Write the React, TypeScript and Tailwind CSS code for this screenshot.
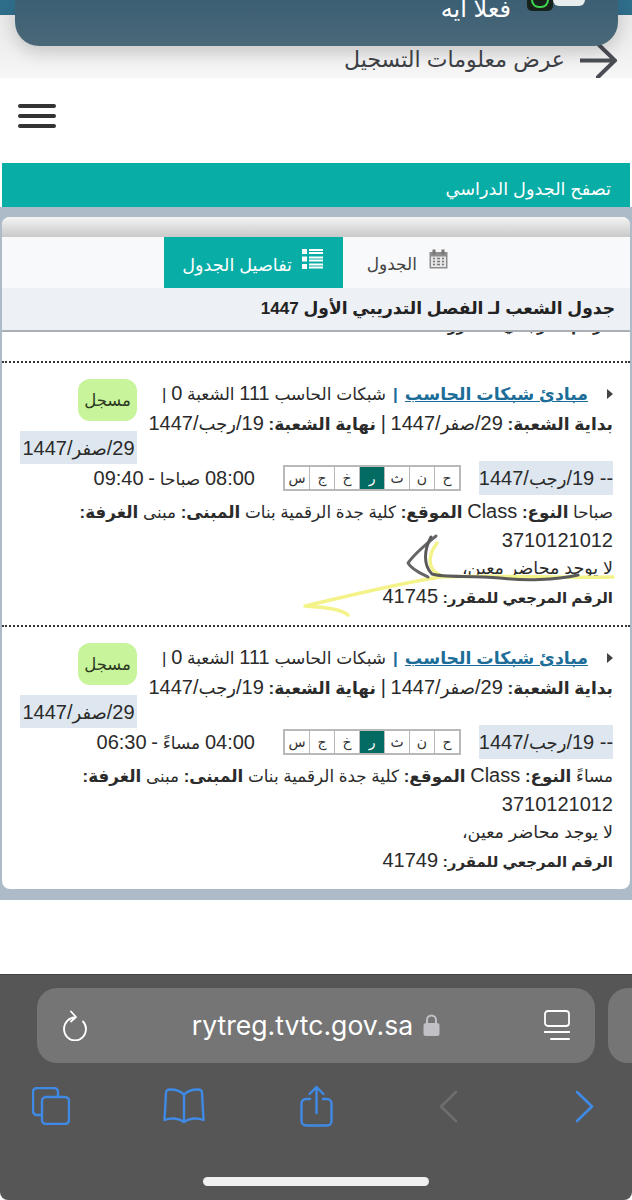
const font = "font-['Liberation_Sans','DejaVu_Sans',sans-serif]";

function N(props: { children: string }) {
  return <span className="text-[20px]">{props.children}</span>;
}

function HijriDate(props: { d: string; m: string }) {
  return (
    <span className="text-[18px]">
      <N>{props.d + "/"}</N>
      {props.m}
      <N>/1447</N>
    </span>
  );
}

function DayTable() {
  const days = ["ح", "ن", "ث", "ر", "خ", "ج", "س"];
  return (
    <div className="flex h-[26px] w-[178px] border-2 border-[#b9b9b9] bg-white">
      {days.map((d, i) => (
        <div
          key={i}
          className={
            d === "ر"
              ? "flex-1 flex items-center justify-center text-[14px] bg-[#046b63] text-white border-l border-[#b9b9b9]"
              : "flex-1 flex items-center justify-center text-[14px] text-[#333] border-l border-[#b9b9b9] last:border-l-0"
          }
        >
          {d}
        </div>
      ))}
    </div>
  );
}

function Section(props: { t1: string; t2: string; period: string; type: string; ref_no: string }) {
  return (
    <div className="border-t-2 border-dotted border-[#333] pt-[16px] pr-[17px] pl-[18px] h-[264px]">
      <div className="flex justify-between h-[82px]">
        <div className="text-[17px] leading-[29px] text-[#2b2b2b] whitespace-nowrap">
          <div className="flex items-center">
            <span className="ml-[19px] h-0 w-0 border-y-[5px] border-y-transparent border-l-[6px] border-l-[#444]" />
            <span className="text-[#1c6d98] underline font-bold text-[17.300px]">مبادئ شبكات الحاسب</span>
            <span className="mx-[7px] text-[#1c6d98] font-bold">|</span>
            <span>
              شبكات الحاسب <N>111</N> الشعبة <N>0</N> |
            </span>
          </div>
          <div>
            <b>بداية الشعبة:</b> <HijriDate d="29" m="صفر" /> <N>|</N> <b>نهاية الشعبة:</b> <HijriDate d="19" m="رجب" />
          </div>
        </div>
        <div className="w-[117px] flex flex-col items-start">
          <div className="w-[59px] h-[42px] rounded-[12px] bg-[#c8f59c] flex items-center justify-center text-[16.500px] text-[#2c3a20] shrink-0">
            مسجل
          </div>
          <div className="mt-[10px] w-[117px] h-[33px] bg-[#dee7ef] flex items-center justify-center text-[#2b2b2b] whitespace-nowrap shrink-0">
            <HijriDate d="29" m="صفر" />
          </div>
        </div>
      </div>
      <div className="flex items-center h-[34px] text-[17px] text-[#2b2b2b] whitespace-nowrap">
        <div className="w-[134px] h-[34px] bg-[#dee7ef] flex items-center justify-center">
          <span>
            <N>-- </N>
            <HijriDate d="19" m="رجب" />
          </span>
        </div>
        <div className="mr-[18px]"><DayTable /></div>
        <div className="mr-[28px]">
          <N>{props.t1}</N> {props.period} <N>-</N> <N>{props.t2}</N>
        </div>
      </div>
      <div className="mt-[3px] text-[16.800px] leading-[27.5px] text-[#2b2b2b] whitespace-nowrap">
        <div>
          {props.type} <b>النوع:</b> <N>Class</N> <b>الموقع:</b> كلية جدة الرقمية بنات <b>المبنى:</b> مبنى <b>الغرفة:</b>
        </div>
        <div><N>3710121012</N></div>
        <div className="text-[17.500px]">لا يوجد محاضر معين،</div>
        <div>
          <b className="text-[15px]">الرقم المرجعي للمقرر:</b> <N>{props.ref_no}</N>
        </div>
      </div>
    </div>
  );
}

export default function App() {
  return (
    <div className={"relative w-[632px] h-[1200px] overflow-hidden bg-white flex flex-col " + font} dir="rtl">
      {/* top strip */}
      <div className="h-[78px] shrink-0 bg-gradient-to-b from-[#e6e6e6] to-[#f6f6f6]">
        <div className="h-[15px] bg-[#2f6f8c]" />
        <div className="flex items-start h-[63px] pr-[15px] pt-[28px] text-[#3e4146]">
          <svg width="37" height="35" viewBox="0 0 37 35" className="shrink-0">
            <path d="M0 17.500H35M18 1L35 17.500L18 34" fill="none" stroke="#4a4e54" strokeWidth="4" strokeLinecap="round" strokeLinejoin="miter" />
          </svg>
          <span className="mr-[15px] mt-[5px] text-[22px] leading-[24px] whitespace-nowrap">عرض معلومات التسجيل</span>
        </div>
      </div>

      {/* notification overlay */}
      <div className="absolute left-[15px] top-0 w-[603px] h-[46px] rounded-b-[24px] bg-gradient-to-b from-[#3c5f74] to-[#4a6878] shadow-[0_6px_18px_rgba(0,0,0,0.18)] overflow-hidden">
        <div className="flex items-start pr-[33px]">
          <div className="w-[32px] h-[6px] rounded-b-[14px] bg-[#e8eeee]" />
          <div className="w-[26px] h-[11px] rounded-b-[5px] bg-[#17231a] flex justify-center overflow-hidden">
            <div className="w-[18px] h-[8px] rounded-b-full border-2 border-t-0 border-[#3fd24f]" />
          </div>
          <span className="mr-[16px] text-[24px] leading-[18px] text-white whitespace-nowrap">فعلا ايه</span>
        </div>
      </div>

      {/* nav */}
      <div className="h-[85px] shrink-0 flex justify-end items-start pt-[26px] pl-[18px]">
        <div className="flex flex-col gap-[6px] w-[38px]">
          <div className="h-[4px] rounded bg-[#333]" />
          <div className="h-[4px] rounded bg-[#333]" />
          <div className="h-[4px] rounded bg-[#333]" />
        </div>
      </div>

      {/* teal title */}
      <div className="h-[44px] mx-[2px] shrink-0 bg-[#08ada6] flex items-end justify-start pr-[19px] pb-[4px] text-white text-[17.700px] whitespace-nowrap">
        تصفح الجدول الدراسي
      </div>

      {/* panel */}
      <div className="h-[693px] shrink-0 bg-[#adbac8] pt-[10px] px-[2px]">
        <div className="h-[672px] bg-white rounded-[8px] overflow-hidden">
          <div className="h-[20px] bg-gradient-to-b from-[#f4f4f4] to-[#c9c9c9]" />
          <div className="h-[51px] bg-[#f7f9fb] flex pr-[182px] whitespace-nowrap">
            <div className="w-[105px] flex items-center justify-start gap-[12px] text-[#444] text-[17px]">
              <svg width="19" height="20" viewBox="0 0 19 20" className="mt-[-8px] shrink-0">
                <rect x="0.5" y="3" width="18" height="16.500" fill="#8d8d8d" />
                <rect x="2" y="7.500" width="15" height="10.500" fill="#e6e6e6" />
                <rect x="3.500" y="0.500" width="3" height="5" fill="#777" />
                <rect x="12.500" y="0.500" width="3" height="5" fill="#777" />
                <path d="M4 9.500h2M8 9.500h3M13 9.500h2M4 12.500h2M8 12.500h3M13 12.500h2M4 15.500h2M8 15.500h3M13 15.500h2" stroke="#777" strokeWidth="1.500" />
              </svg>
              <span className="mt-[5px]">الجدول</span>
            </div>
            <div className="flex-none w-[179px] bg-[#08ada6] text-white flex items-center justify-start pr-[20px] gap-[10px] text-[17.600px]">
              <svg width="21" height="20" viewBox="0 0 21 20" className="mt-[-8px] shrink-0">
                <path d="M0 0h5v5H0zM0 7.500h5v5H0zM0 15h5v5H0z" fill="#fff" />
                <path d="M7 1h14M7 4h14M7 8.500h14M7 11.500h14M7 15.500h14M7 18.500h14" stroke="#fff" strokeWidth="2" />
              </svg>
              <span className="mt-[5px]">تفاصيل الجدول</span>
            </div>
          </div>
          <div className="h-[44px] bg-[#edf0f4] border-b-2 border-[#aab0b6] flex items-center pr-[15px] text-[17.100px] font-bold text-[#222] whitespace-nowrap">
            جدول الشعب لـ الفصل التدريبي الأول 1447
          </div>
          <div className="relative">
            <div className="h-[29px] overflow-hidden pr-[17px] text-[16.800px] text-[#2b2b2b] whitespace-nowrap">
              <div className="mt-[-21px] leading-[27px]">
                <b className="text-[15px]">الرقم المرجعي للمقرر:</b> <N>41740</N>
              </div>
            </div>
            <Section t1="08:00" t2="09:40" period="صباحا" type="صباحا" ref_no="41745" />
            <Section t1="04:00" t2="06:30" period="مساءً" type="مساءً" ref_no="41749" />
            <div className="border-t-2 border-dotted border-[#333]" />
          </div>
        </div>
      </div>

      <div className="flex-1" />

      {/* safari bar */}
      <div className="h-[226px] shrink-0 bg-[#565656] border-t border-[#444] rounded-b-[8px]" dir="ltr">
        <div className="flex gap-[13px] pt-[13px] pl-[37px]">
          <div className="w-[558px] h-[75px] shrink-0 rounded-[20px] bg-[#757575] flex items-center px-[25px]">
            <svg width="26" height="31" viewBox="0 0 26 31" className="shrink-0" fill="none" stroke="#fff" strokeWidth="1.800" strokeLinecap="round" strokeLinejoin="round">
              <path d="M13 7.500A11 11.500 0 1 0 24 19c0-3-1-5.500-3-7.500" />
              <path d="M9 1.500l5 5.500-5 4.500" />
            </svg>
            <div className="flex-1 flex items-center justify-center gap-[10px] text-[26.600px] text-white font-['Inter',sans-serif]">
              <span>rytreg.tvtc.gov.sa</span>
              <svg width="17" height="22" viewBox="0 0 17 22">
                <path d="M4 10V6a4.500 4.500 0 0 1 9 0v4" fill="none" stroke="#c0c0c6" strokeWidth="2" />
                <rect x="0.500" y="9" width="16" height="13" rx="2.500" fill="#c0c0c6" />
              </svg>
            </div>
            <svg width="26" height="31" viewBox="0 0 26 31" className="shrink-0" fill="none" stroke="#fff" strokeWidth="1.800" strokeLinecap="round">
              <rect x="1" y="1" width="24" height="15" rx="3" />
              <path d="M0.500 22h25" />
              <path d="M7 29h18" strokeWidth="2" />
            </svg>
          </div>
          <div className="w-[40px] h-[75px] shrink-0 rounded-l-[20px] bg-[#757575]" />
        </div>
        <div className="relative h-[40px] mt-[22px]">
          <div className="flex items-center h-[42px] pl-[32px]">
            <svg width="38" height="38" viewBox="0 0 38 38" fill="none" stroke="#3f8ae6" strokeWidth="2.400" className="shrink-0">
              <path d="M10 28H5a4 4 0 0 1-4-4V5a4 4 0 0 1 4-4h17a4 4 0 0 1 4 4v4" />
              <rect x="10" y="10" width="27" height="27" rx="4" />
            </svg>
            <svg width="42" height="36" viewBox="0 0 42 36" fill="none" stroke="#3f8ae6" strokeWidth="2.400" strokeLinejoin="round" strokeLinecap="round" className="ml-[93px] shrink-0">
              <path d="M21 7C18 3 13 1.500 7 1.500 4 1.500 3 3 3 5L1.500 32c6-2.500 14-2 19.500 2 5.500-4 13.500-4.500 19.500-2L39 5c0-2-1-3.500-4-3.500C29 1.500 24 3 21 7zM21 7v26" />
            </svg>
            <svg width="33" height="42" viewBox="0 0 33 42" fill="none" stroke="#3f8ae6" strokeWidth="2.400" strokeLinecap="round" strokeLinejoin="round" className="ml-[95px] shrink-0">
              <path d="M10 14H6a4.500 4.500 0 0 0-4.500 4.500V36A4.500 4.500 0 0 0 6 40.500h21a4.500 4.500 0 0 0 4.500-4.500V18.500A4.500 4.500 0 0 0 27 14h-4" />
              <path d="M16.500 28V2M9.500 9l7-7 7 7" />
            </svg>
            <svg width="20" height="33" viewBox="0 0 20 33" fill="none" stroke="#6e6e6e" strokeWidth="2.600" strokeLinecap="round" strokeLinejoin="round" className="ml-[105px] shrink-0">
              <path d="M18 2L3 16.500 18 31" />
            </svg>
            <svg width="20" height="33" viewBox="0 0 20 33" fill="none" stroke="#3f8ae6" strokeWidth="2.600" strokeLinecap="round" strokeLinejoin="round" className="ml-[117px] shrink-0">
              <path d="M2 2l15 14.500L2 31" />
            </svg>
          </div>
        </div>
        <div className="mt-[52px] mx-auto w-[226px] h-[9px] rounded-full bg-[#f0f0f0]" />
      </div>

      {/* hand-drawn annotation */}
      <svg className="absolute left-0 top-0 pointer-events-none" width="632" height="1200" fill="none" strokeLinecap="round" strokeLinejoin="round">
        <path d="M613 577C560 578 500 575 440 577C390 585 340 598 305 606C320 607 340 608 348 615" stroke="#f4f38a" strokeWidth="3.500" />
        <path d="M437 543C428 555 426 570 442 576" stroke="#f4f38a" strokeWidth="3.500" />
        <path d="M436 536C425 545 415 553 408 563C412 570 422 574 428 577" stroke="#666" strokeWidth="3" />
        <path d="M431 537C424 550 423 565 432 574C445 578 470 575 500 578C525 581 555 580 578 575" stroke="#5a5a5a" strokeWidth="3" />
      </svg>
    </div>
  );
}
